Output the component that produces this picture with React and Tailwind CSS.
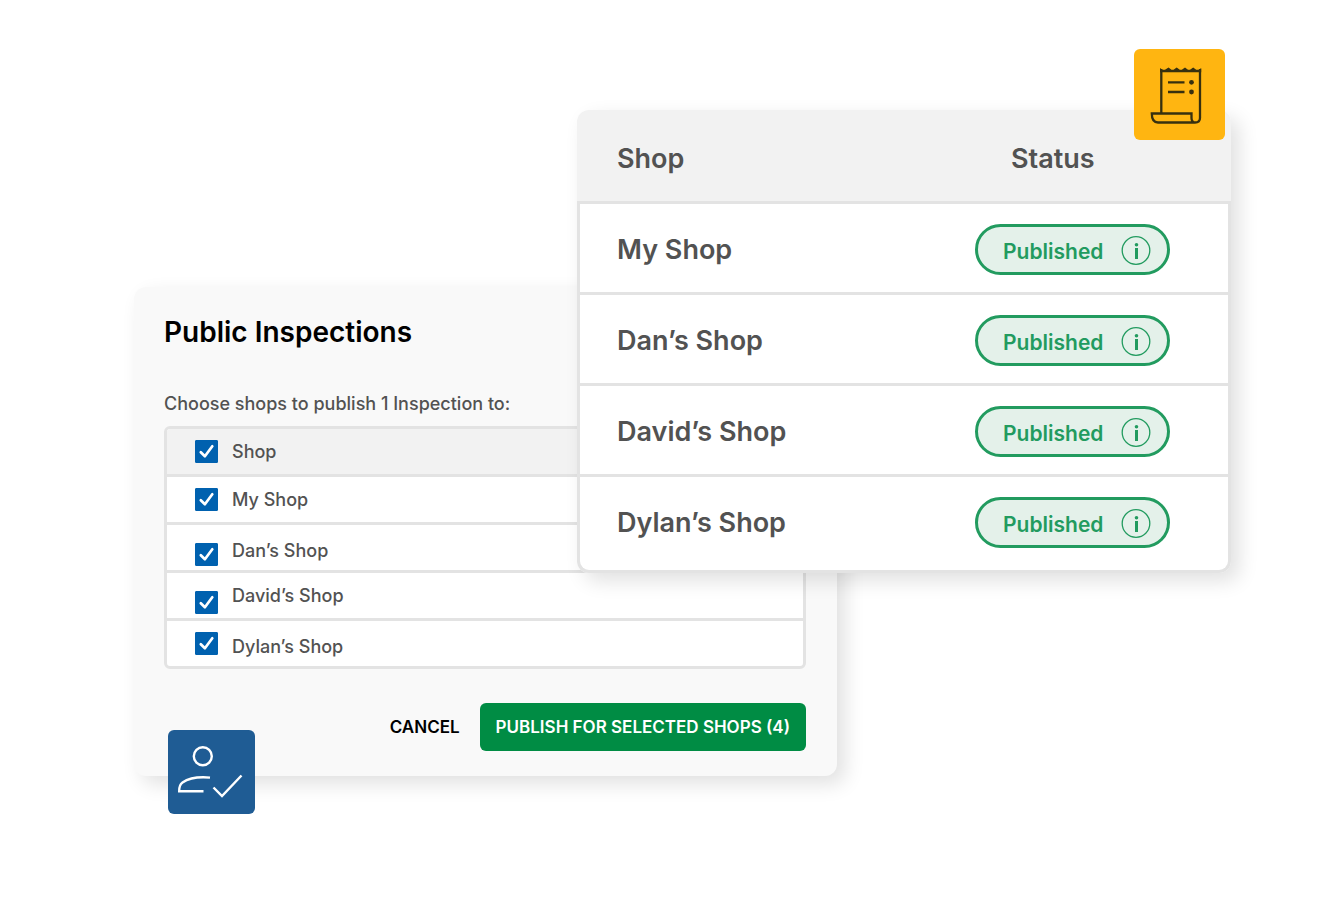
import { useState } from "react";

const SHOPS = ["My Shop", "Dan’s Shop", "David’s Shop", "Dylan’s Shop"];

// how the tick box and the name sit in each row of the list
const ROWS = [
  { name: "Shop", header: true, box: "self-center", text: "self-center" },
  { name: SHOPS[0], box: "self-center", text: "self-center" },
  { name: SHOPS[1], box: "self-end", text: "self-end" },
  { name: SHOPS[2], box: "self-end", text: "self-center" },
  { name: SHOPS[3], box: "self-center", text: "self-end" },
];

const Checkbox = ({ id, checked, onChange, className }) => (
  <span className={`grid size-[23px] ${className}`}>
    <input
      id={id}
      type="checkbox"
      checked={checked}
      onChange={onChange}
      className="peer col-start-1 row-start-1 size-[23px] appearance-none rounded-[1px] border border-[#0061af] bg-white checked:bg-[#0061af]"
    />
    <svg
      viewBox="0 0 23 23"
      className="pointer-events-none invisible col-start-1 row-start-1 size-[23px] peer-checked:visible"
      fill="none"
      stroke="white"
      strokeWidth="2.7"
      strokeLinecap="round"
      strokeLinejoin="round"
      aria-hidden="true"
    >
      <path d="M5.8 12.2 9.9 16.3 17.3 6.3" />
    </svg>
  </span>
);

const PublishedPill = () => (
  <div className="flex h-[51px] w-[195px] items-center justify-between rounded-full border-3 border-[#229b5f] bg-[#e4f1ea] pl-[25px] pr-4 text-[#229b5f]">
    <span className="pt-1 text-[21px] leading-6 font-semibold">Published</span>
    <button type="button" aria-label="Info">
      <svg viewBox="0 0 30 30" className="block size-[30px]" fill="none" aria-hidden="true">
        <circle cx="15" cy="15.5" r="13.8" stroke="currentColor" strokeWidth="1.3" />
        <circle cx="15.5" cy="9.7" r="1.8" fill="currentColor" />
        <rect x="14" y="13" width="3" height="11" fill="currentColor" />
      </svg>
    </button>
  </div>
);

const ReceiptBadge = () => (
  <div className="absolute -top-[61px] right-1.5 size-[91px] rounded-md bg-[#ffb511]">
    <svg viewBox="0 0 91 91" className="size-full" fill="none" stroke="#37300f" strokeWidth="2.3" aria-hidden="true">
      <path d="M27.3 64V20M66 20V69Q66 73.5 61 73.5H24Q17.8 73.5 17.8 64.5H57.5V69Q57.5 73.5 61.5 73.5" />
      <path
        d="M26.1 19 28.3 20.8H31L34.5 18.6 37.5 20.8H39.5L42.7 18.6 45.8 20.8H47.8L51 18.6 54 20.8H56L59.2 18.6 62.2 20.8H65L67.2 19V23.2H26.1Z"
        fill="#37300f"
        stroke="none"
      />
      <path d="M34 33.3H50.5M34 43H50.5" />
      <circle cx="57.5" cy="33.3" r="2.4" fill="#37300f" stroke="none" />
      <circle cx="57.5" cy="43" r="2.4" fill="#37300f" stroke="none" />
    </svg>
  </div>
);

const UserCheckBadge = () => (
  <div className="absolute -bottom-[38px] left-[34px] h-[84px] w-[87px] rounded-md bg-[#1f5c94]">
    <svg viewBox="0 0 87 84" className="size-full" fill="none" stroke="white" strokeWidth="2.4" aria-hidden="true">
      <circle cx="34.8" cy="26.2" r="9" />
      <path d="M42 47.6Q24 46 14.5 52.5 11 55 11.2 61.3H35.5" />
      <path d="M45.5 57.5 54 66 73.5 45.5" />
    </svg>
  </div>
);

const PublishCard = () => {
  const [selected, setSelected] = useState(SHOPS);

  const toggle = (row) => {
    if (row.header) {
      setSelected(selected.length === SHOPS.length ? [] : SHOPS);
    } else if (selected.includes(row.name)) {
      setSelected(selected.filter((s) => s !== row.name));
    } else {
      setSelected([...selected, row.name]);
    }
  };

  return (
    <section className="relative col-span-2 col-start-1 row-start-1 mt-[177px] self-start rounded-xl bg-[#f9f9f9] pt-[29px] pr-[31px] pb-[25px] pl-[30px] shadow-[8px_8px_20px_rgba(0,0,0,0.12)]">
      <h1 className="text-[28px] leading-8 font-semibold text-black">Public Inspections</h1>
      <p className="mt-11 text-[18px] leading-6 font-medium">Choose shops to publish 1 Inspection to:</p>

      <ul className="mt-2.5 divide-y-3 divide-[#e3e3e3] overflow-hidden rounded-md border-3 border-[#e3e3e3] bg-white">
        {ROWS.map((row, i) => (
          <li key={row.name} className={row.header ? "bg-[#f2f2f2]" : ""}>
            <label htmlFor={`shop-${i}`} className="flex h-[45px] gap-3.5 py-1 pl-7">
              <Checkbox
                id={`shop-${i}`}
                checked={row.header ? selected.length === SHOPS.length : selected.includes(row.name)}
                onChange={() => toggle(row)}
                className={row.box}
              />
              <span className={`text-[18px] leading-[30px] font-medium ${row.text}`}>{row.name}</span>
            </label>
          </li>
        ))}
      </ul>

      <div className="mt-[34px] flex items-center justify-end gap-5 text-[17px] leading-6 font-semibold">
        <button type="button" className="text-black">
          CANCEL
        </button>
        <button type="button" className="h-12 rounded-md bg-[#008c44] px-4 text-white">
          PUBLISH FOR SELECTED SHOPS ({selected.length})
        </button>
      </div>
      <UserCheckBadge />
    </section>
  );
};

const StatusCard = () => (
  <section className="relative col-span-2 col-start-2 row-start-1 self-start rounded-xl bg-white shadow-[8px_8px_20px_rgba(0,0,0,0.12)]">
    <table className="w-full border-separate border-spacing-0 text-left text-[27px] leading-8 font-semibold">
      <thead>
        <tr className="h-[91px]">
          <th className="rounded-tl-xl bg-[#f2f2f2] pt-1.5 pl-10 font-semibold">Shop</th>
          <th className="w-64 rounded-tr-xl bg-[#f2f2f2] pt-1.5 pl-9 font-semibold">Status</th>
        </tr>
      </thead>
      <tbody>
        {SHOPS.map((shop) => (
          <tr key={shop} className="group/row">
            <td className="border-t-3 border-l-3 border-[#e3e3e3] pt-5 pb-[17px] pl-[37px] group-last/row:rounded-bl-xl group-last/row:border-b-3 group-last/row:pb-[22px]">
              {shop}
            </td>
            <td className="border-t-3 border-r-3 border-[#e3e3e3] pt-5 pb-[17px] group-last/row:rounded-br-xl group-last/row:border-b-3 group-last/row:pb-[22px]">
              <PublishedPill />
            </td>
          </tr>
        ))}
      </tbody>
    </table>
    <ReceiptBadge />
  </section>
);

const App = () => {
  return (
    <main className="grid min-h-screen grid-cols-[443fr_260fr_394fr] bg-white pt-[110px] pr-[103px] pb-[140px] pl-[134px] font-['Inter',sans-serif] text-[#525252]">
      <PublishCard />
      <StatusCard />
    </main>
  );
};

export default App;
